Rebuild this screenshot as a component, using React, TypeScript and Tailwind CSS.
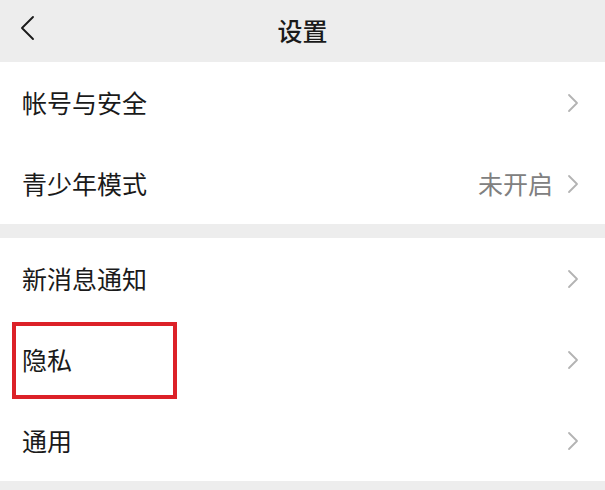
const Chevron = () => (
  <svg width="12" height="20" viewBox="0 0 12 20" fill="none" className="shrink-0">
    <path d="M2 2l8 8-8 8" stroke="#b3b3b3" strokeWidth="1.8" strokeLinecap="round" strokeLinejoin="round" />
  </svg>
)

function Row({ label, value, boxed }: { label: string; value?: string; boxed?: boolean }) {
  return (
    <div className="relative flex h-[81px] items-center justify-between bg-white pl-[22px] pr-[26px]">
      <span className="text-[25px] text-[#1a1a1a]">{label}</span>
      <div className="flex items-center gap-[14px]">
        {value && <span className="text-[25px] text-[#808080]">{value}</span>}
        <Chevron />
      </div>
      {boxed && (
        <div className="absolute left-[12px] top-[3px] h-[77px] w-[165px] border-[4px] border-[#dc2128]" />
      )}
    </div>
  )
}

export default function App() {
  return (
    <div
      className="h-[490px] w-[605px] overflow-hidden bg-[#ededed]"
      style={{ fontFamily: '"Noto Sans CJK SC", "Noto Sans", sans-serif' }}
    >
      <div className="relative flex h-[62px] items-center justify-center">
        <svg width="20" height="28" viewBox="0 0 20 28" fill="none" className="absolute left-[18px] top-[14px]">
          <path d="M15 3L4 14l11 11" stroke="#1a1a1a" strokeWidth="1.9" strokeLinecap="round" strokeLinejoin="round" />
        </svg>
        <span className="text-[25px] font-medium text-[#1a1a1a]">设置</span>
      </div>
      <div className="flex flex-col">
        <Row label="帐号与安全" />
        <Row label="青少年模式" value="未开启" />
      </div>
      <div className="mt-[14px] flex flex-col">
        <Row label="新消息通知" />
        <Row label="隐私" boxed />
        <Row label="通用" />
      </div>
    </div>
  )
}
